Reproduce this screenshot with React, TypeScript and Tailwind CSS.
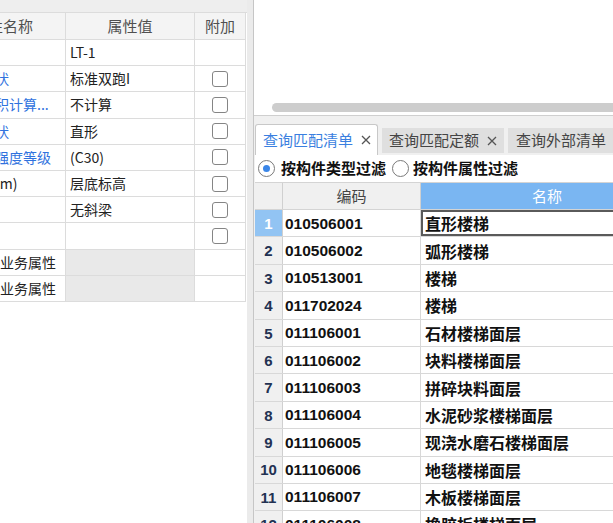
import React from 'react';

type PropRow = {
  name: string;
  value: string;
  blue?: boolean;
  check?: boolean;
  group?: boolean;
};

const propRows: PropRow[] = [
  { name: '名称', value: 'LT-1' },
  { name: '截面形状', value: '标准双跑I', blue: true, check: true },
  { name: '建筑面积计算...', value: '不计算', blue: true, check: true },
  { name: '图元形状', value: '直形', blue: true, check: true },
  { name: '混凝土强度等级', value: '(C30)', blue: true, check: true },
  { name: '底标高(m)', value: '层底标高', check: true },
  { name: '备注', value: '无斜梁', check: true },
  { name: '梯梁', value: '', check: true },
  { name: '钢筋业务属性', value: '', group: true },
  { name: '土建业务属性', value: '', group: true },
];

const listRows: [string, string][] = [
  ['010506001', '直形楼梯'],
  ['010506002', '弧形楼梯'],
  ['010513001', '楼梯'],
  ['011702024', '楼梯'],
  ['011106001', '石材楼梯面层'],
  ['011106002', '块料楼梯面层'],
  ['011106003', '拼碎块料面层'],
  ['011106004', '水泥砂浆楼梯面层'],
  ['011106005', '现浇水磨石楼梯面层'],
  ['011106006', '地毯楼梯面层'],
  ['011106007', '木板楼梯面层'],
  ['011106008', '橡胶板楼梯面层'],
];

const CloseX = () => (
  <svg width="10" height="10" viewBox="0 0 10 10" className="shrink-0">
    <path d="M1 1L9 9M9 1L1 9" stroke="#555" strokeWidth="1.3" />
  </svg>
);

const Radio = ({ checked }: { checked?: boolean }) => (
  <span className="w-[17px] h-[17px] shrink-0 rounded-full border border-[#7a7a7a] bg-white flex items-center justify-center">
    {checked && <span className="w-[7px] h-[7px] rounded-full bg-[#3a86e8]" />}
  </span>
);

// 左侧属性表
const PropertyPanel = () => (
  <div className="w-[247px] shrink-0 bg-white overflow-hidden font-['Noto_Sans_CJK_SC',sans-serif] text-[14px]">
    <div className="h-[13px] bg-[#eeeeee] border-b border-[#dcdcdc]" />
    <div className="ml-[-59px] w-[305px]">
      {/* Header */}
      <div className="flex h-[27px] bg-[#f4f4f4] border-b border-[#dcdcdc] text-[15px] text-[#505050]">
        <div className="w-[125px] shrink-0 border-r border-[#dcdcdc] flex items-center justify-center">属性名称</div>
        <div className="w-[129px] shrink-0 border-r border-[#dcdcdc] flex items-center justify-center">属性值</div>
        <div className="w-[51px] shrink-0 border-r border-[#dcdcdc] flex items-center justify-center">附加</div>
      </div>
      {propRows.map((r, i) => (
        <div key={i} className="flex h-[26.2px] border-b border-[#dcdcdc]">
          <div
            className={`w-[125px] shrink-0 border-r border-[#dcdcdc] flex items-center pl-[12px] overflow-hidden whitespace-nowrap ${
              r.blue ? 'text-[#2f72de]' : 'text-[#222]'
            }`}
          >
            {r.group && <span className="w-[15px] h-[15px] mr-[4px] shrink-0 border border-[#999]" />}
            {r.name}
          </div>
          <div
            className={`w-[129px] shrink-0 border-r border-[#dcdcdc] flex items-center pl-[4px] text-[#222] whitespace-nowrap ${
              r.group ? 'bg-[#e9e9e9]' : ''
            }`}
          >
            {r.value}
          </div>
          <div className="w-[51px] shrink-0 border-r border-[#dcdcdc] flex items-center justify-center">
            {r.check && <span className="w-[16px] h-[16px] rounded-[3px] border border-[#858585] bg-white" />}
          </div>
        </div>
      ))}
    </div>
  </div>
);

// 右侧：上方空白区 + 查询清单
const QueryPanel = () => (
  <div className="flex-1 min-w-0 flex flex-col border-l border-[#c6c6c6] overflow-hidden font-['Noto_Sans_CJK_SC',sans-serif]">
    <div className="h-[116px] shrink-0 bg-white border-b border-[#cfcfcf] flex flex-col justify-end pb-[3px]">
      <div className="ml-[18px] w-[420px] h-[9px] rounded-full bg-[#cdcdcd]" />
    </div>

    <div className="flex-1 bg-[#f0f0f0] pl-[1px]">
      {/* Tabs */}
      <div className="h-[39px] flex items-end gap-[4px] text-[15px]">
        <div className="w-[123px] h-[31px] shrink-0 bg-white border border-b-0 border-[#c8c8c8] rounded-t-[3px] flex items-center pl-[7px] gap-[8px] text-[#3a7fe0]">
          <span>查询匹配清单</span>
          <CloseX />
        </div>
        <div className="w-[122px] h-[25px] mb-[2px] shrink-0 bg-[#dfdfdf] flex items-center pl-[7px] gap-[8px] text-[#444]">
          <span>查询匹配定额</span>
          <CloseX />
        </div>
        <div className="w-[122px] h-[25px] mb-[2px] shrink-0 bg-[#dfdfdf] flex items-center pl-[8px] text-[#444]">
          <span>查询外部清单</span>
        </div>
      </div>

      {/* Filter radios */}
      <div className="h-[28px] bg-white border-b border-[#d4d4d4] flex items-center pl-[3px] text-[15px] font-semibold text-[#111] whitespace-nowrap">
        <Radio checked />
        <span className="ml-[6px]">按构件类型过滤</span>
        <span className="ml-[6px]">
          <Radio />
        </span>
        <span className="ml-[4px]">按构件属性过滤</span>
      </div>

      {/* Grid */}
      <div className="bg-white">
        <div className="flex h-[27px] border-b border-[#d4d4d4] text-[15px]">
          <div className="w-[28px] shrink-0 bg-[#f0f0f0] border-r border-[#d0d0d0]" />
          <div className="w-[138px] shrink-0 bg-[#f0f0f0] border-r border-[#d0d0d0] flex items-center justify-center text-[#444]">编码</div>
          <div className="w-[252px] shrink-0 bg-[#7ab6f2] flex items-center justify-center text-white">名称</div>
        </div>
        {listRows.map(([code, name], i) => (
          <div key={code} className="flex h-[27.4px] border-b border-[#d8d8d8]">
            <div
              className={`w-[28px] shrink-0 border-r border-[#d0d0d0] flex items-center justify-center pt-[2px] font-['Liberation_Sans',sans-serif] font-bold text-[15px] ${
                i === 0 ? 'bg-[#92c4f3] text-white' : 'bg-[#f0f0f0] text-[#233253]'
              }`}
            >
              {i + 1}
            </div>
            <div className="w-[138px] shrink-0 border-r border-[#d8d8d8] flex items-center pl-[2px] font-['Liberation_Sans',sans-serif] font-bold text-[15.5px] text-[#111]">
              {code}
            </div>
            <div
              className={`w-[252px] shrink-0 flex items-center font-bold text-[16px] text-[#111] whitespace-nowrap ${
                i === 0 ? 'border-2 border-[#5a5a5a] pl-[2px]' : 'pl-[4px]'
              }`}
            >
              {name}
            </div>
          </div>
        ))}
      </div>
    </div>
  </div>
);

export default function App() {
  return (
    <div className="w-[613px] h-[523px] flex overflow-hidden bg-white">
      <PropertyPanel />
      <div className="w-[6px] shrink-0 bg-[#ebebeb]" />
      <QueryPanel />
    </div>
  );
}
